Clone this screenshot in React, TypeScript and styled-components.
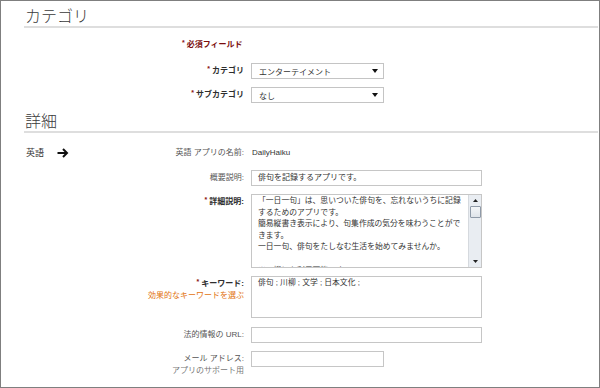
import React from 'react';
import styled, { createGlobalStyle } from 'styled-components';

const GlobalStyle = createGlobalStyle`
  html, body {
    margin: 0;
    padding: 0;
    background: #ffffff;
  }
  body {
    font-family: "Liberation Sans", "Noto Sans CJK JP", sans-serif;
  }
`;

const Page = styled.div`
  box-sizing: border-box;
  width: 600px;
  height: 388px;
  border: 1px solid #7f7f7f;
  padding: 0 1px 0 23px;
  overflow: hidden;
  background: #ffffff;
`;

const Heading = styled.h2<{ $mt: number }>`
  margin: ${(p) => p.$mt}px 0 0;
  padding: 4px 0 1px 1px;
  font-family: "Noto Sans CJK JP", sans-serif;
  font-size: 16px;
  line-height: 20px;
  font-weight: 300;
  color: #3a3a3a;
  border-bottom: 2px solid #dedede;
`;

const Row = styled.div<{ $mt: number }>`
  display: flex;
  align-items: flex-start;
  gap: 7px;
  margin-top: ${(p) => p.$mt}px;
`;

const LabelCell = styled.div`
  width: 220px;
  flex: none;
  display: flex;
  flex-direction: column;
  align-items: flex-end;
  padding-top: 2px;
`;

const SplitCell = styled.div`
  width: 220px;
  flex: none;
  display: flex;
  justify-content: space-between;
  align-items: center;
`;

const Label = styled.span<{ $required?: boolean }>`
  font-size: 8px;
  line-height: 12px;
  height: 12px;
  font-weight: ${(p) => (p.$required ? 700 : 400)};
  color: ${(p) => (p.$required ? '#2e2e2e' : '#555555')};
  white-space: nowrap;
`;

const Hint = styled.span<{ $accent?: boolean }>`
  font-size: 8px;
  line-height: 12px;
  color: ${(p) => (p.$accent ? '#e2730f' : '#777777')};
  white-space: nowrap;
`;

const Star = styled.span`
  position: relative;
  top: -2px;
  color: #8a1010;
  font-size: 7px;
  font-weight: 700;
  margin-right: 2px;
`;

const RequiredNote = styled.div`
  margin: 11px 0 0 158px;
  font-size: 8px;
  line-height: 12px;
  height: 12px;
  font-weight: 700;
  color: #7a0c0c;
`;

const SelectBox = styled.div`
  box-sizing: border-box;
  width: 133px;
  height: 16px;
  border: 1px solid #c4c4c4;
  display: flex;
  align-items: center;
  justify-content: space-between;
  padding: 0 5px 0 7px;
  font-size: 8px;
  color: #333333;
  background: #ffffff;
`;

const TextInput = styled.div<{ $w: number }>`
  box-sizing: border-box;
  width: ${(p) => p.$w}px;
  height: 16px;
  border: 1px solid #c6c6c6;
  padding: 0 6px;
  font-size: 8px;
  line-height: 14px;
  color: #333333;
  white-space: nowrap;
`;

const TextArea = styled.div<{ $h: number }>`
  box-sizing: border-box;
  width: 231px;
  height: ${(p) => p.$h}px;
  border: 1px solid #c6c6c6;
  display: flex;
  overflow: hidden;
`;

const AreaText = styled.div`
  flex: 1;
  padding: 0 4px 0 6px;
  font-size: 7.8px;
  line-height: 11.6px;
  color: #333333;
  overflow: hidden;
`;

const Scrollbar = styled.div`
  width: 12px;
  flex: none;
  display: flex;
  flex-direction: column;
  align-items: center;
  background: #e9edf2;
  border-left: 1px solid #d5d9de;
`;

const ScrollButton = styled.div`
  width: 12px;
  height: 11px;
  display: flex;
  align-items: center;
  justify-content: center;
`;

const Thumb = styled.div`
  box-sizing: border-box;
  width: 11px;
  height: 12px;
  border: 1px solid #8f9aa8;
  border-radius: 1px;
  background: linear-gradient(#f4f6f8, #dfe4ea);
`;

const Track = styled.div`
  flex: 1;
`;

const PlainValue = styled.span`
  font-size: 8px;
  line-height: 12px;
  color: #333333;
  padding-left: 1px;
`;

const LangTag = styled.span`
  display: flex;
  align-items: center;
  gap: 13px;
  font-size: 9px;
  line-height: 12px;
  color: #333333;
  padding-left: 2px;
`;

function Caret() {
  return (
    <svg width="6" height="4" viewBox="0 0 6 4">
      <path d="M0 0 H6 L3 4 Z" fill="#111111" />
    </svg>
  );
}

function Arrow({ up }: { up?: boolean }) {
  return (
    <svg width="5" height="3" viewBox="0 0 5 3">
      <path d={up ? 'M0 3 H5 L2.5 0 Z' : 'M0 0 H5 L2.5 3 Z'} fill="#222222" />
    </svg>
  );
}

function BoldArrow() {
  return (
    <svg width="12" height="10" viewBox="0 0 12 10">
      <path d="M0.5 5 H10" stroke="#111111" strokeWidth="2" />
      <path d="M6 1 L10 5 L6 9" stroke="#111111" strokeWidth="2" fill="none" />
    </svg>
  );
}

function Req({ children }: { children: React.ReactNode }) {
  return (
    <Label $required>
      <Star>*</Star>
      {children}
    </Label>
  );
}

function App() {
  return (
    <>
      <GlobalStyle />
      <Page>
        <Heading $mt={0}>カテゴリ</Heading>
        <RequiredNote>
          <Star>*</Star>必須フィールド
        </RequiredNote>
        <Row $mt={12}>
          <LabelCell>
            <Req>カテゴリ</Req>
          </LabelCell>
          <SelectBox>
            <span>エンターテイメント</span>
            <Caret />
          </SelectBox>
        </Row>
        <Row $mt={8}>
          <LabelCell>
            <Req>サブカテゴリ</Req>
          </LabelCell>
          <SelectBox>
            <span>なし</span>
            <Caret />
          </SelectBox>
        </Row>

        <Heading $mt={3}>詳細</Heading>
        <Row $mt={14}>
          <SplitCell>
            <LangTag>
              英語
              <BoldArrow />
            </LangTag>
            <Label>英語 アプリの名前:</Label>
          </SplitCell>
          <PlainValue>DailyHaiku</PlainValue>
        </Row>
        <Row $mt={11}>
          <LabelCell>
            <Label>概要説明:</Label>
          </LabelCell>
          <TextInput $w={231}>俳句を記録するアプリです。</TextInput>
        </Row>
        <Row $mt={8}>
          <LabelCell>
            <Req>詳細説明:</Req>
          </LabelCell>
          <TextArea $h={74}>
            <AreaText>
              「一日一句」は、思いついた俳句を、忘れないうちに記録するためのアプリです。
              <br />
              簡易縦書き表示により、句集作成の気分を味わうことができます。
              <br />
              一日一句、俳句をたしなむ生活を始めてみませんか。
              <br />
              <br />
              ※川柳にも利用可能です。
            </AreaText>
            <Scrollbar>
              <ScrollButton>
                <Arrow up />
              </ScrollButton>
              <Thumb />
              <Track />
              <ScrollButton>
                <Arrow />
              </ScrollButton>
            </Scrollbar>
          </TextArea>
        </Row>
        <Row $mt={8}>
          <LabelCell>
            <Req>キーワード:</Req>
            <Hint $accent>効果的なキーワードを選ぶ</Hint>
          </LabelCell>
          <TextArea $h={42}>
            <AreaText>俳句 ; 川柳 ; 文学 ; 日本文化 ;</AreaText>
          </TextArea>
        </Row>
        <Row $mt={9}>
          <LabelCell>
            <Label>法的情報の URL:</Label>
          </LabelCell>
          <TextInput $w={231} />
        </Row>
        <Row $mt={8}>
          <LabelCell>
            <Label>メール アドレス:</Label>
            <Hint>アプリのサポート用</Hint>
          </LabelCell>
          <TextInput $w={133} />
        </Row>
      </Page>
    </>
  );
}

export default App;
